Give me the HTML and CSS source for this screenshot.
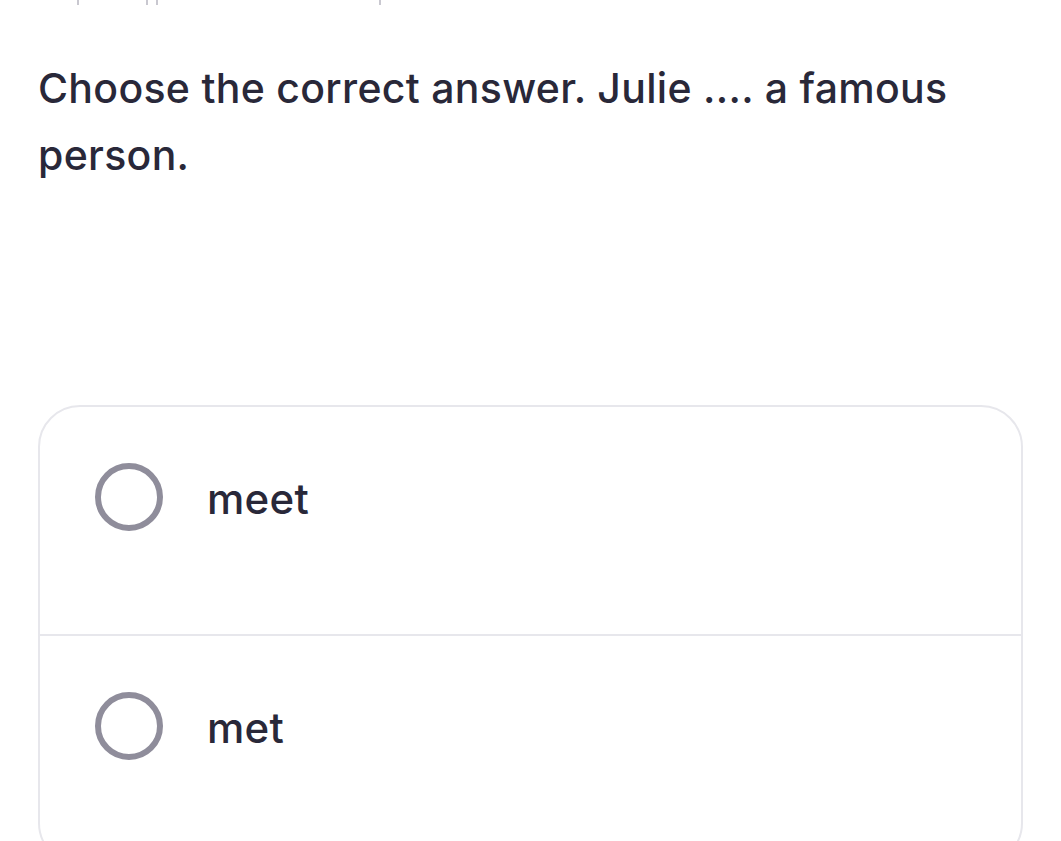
FILE: index.html
```html
<!DOCTYPE html>
<html>
<head>
<meta charset="utf-8">
<link rel="stylesheet" href="styles.css">
</head>
<body>
<div class="page">
  <div class="ticks">
    <span class="tick t1"></span>
    <span class="tick t2"></span>
    <span class="tick t3"></span>
    <span class="tick t4"></span>
  </div>
  <h1 class="question">Choose the correct answer. Julie .... a famous person.</h1>
  <div class="card">
    <div class="option">
      <span class="radio"></span>
      <span class="label">meet</span>
    </div>
    <div class="option">
      <span class="radio"></span>
      <span class="label">met</span>
    </div>
  </div>
</div>
</body>
</html>
```

FILE: styles.css
```css
html, body {
  margin: 0;
  padding: 0;
  background: #ffffff;
}
body {
  font-family: Inter, "Noto Sans", sans-serif;
  color: #292839;
}
.page {
  width: 1061px;
  height: 841px;
  overflow: hidden;
  position: relative;
}
.ticks {
  position: absolute;
  top: 0;
  left: 0;
}
.tick {
  position: absolute;
  top: 0;
  width: 2px;
  height: 5px;
  background: #c9c8d0;
}
.t1 { left: 77px; }
.t2 { left: 146px; }
.t3 { left: 156px; }
.t4 { left: 379px; }
.question {
  margin: 0;
  padding: 55px 80px 0 38px;
  font-size: 41px;
  line-height: 67px;
  font-weight: 500;
  letter-spacing: 0.3px;
}
.card {
  margin: 216px 38px 0 38px;
  border: 2px solid #e7e7ec;
  border-radius: 42px;
  overflow: hidden;
}
.option {
  display: flex;
  align-items: center;
  gap: 44px;
  padding: 56px 0 103px 55px;
}
.option + .option {
  border-top: 2px solid #e7e7ec;
}
.radio {
  width: 56px;
  height: 56px;
  border: 6px solid #8f8d9b;
  border-radius: 50%;
  flex: none;
}
.label {
  font-size: 42px;
  font-weight: 500;
  line-height: 64px;
  letter-spacing: 0.3px;
  padding-top: 4px;
}
```
